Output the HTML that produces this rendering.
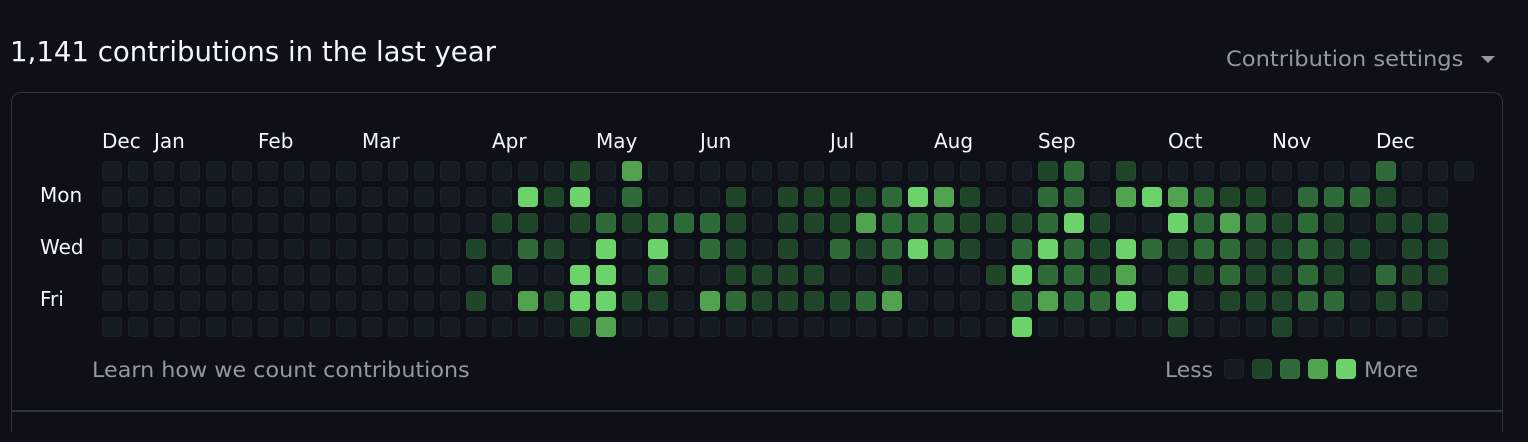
<!DOCTYPE html>
<html><head><meta charset="utf-8">
<style>
*{margin:0;padding:0;box-sizing:border-box}
html,body{width:1528px;height:442px;overflow:hidden}
body{background:#0d1117;position:relative;font-family:"DejaVu Sans","Liberation Sans",sans-serif;color:#f0f6fc}
.a{position:absolute;white-space:nowrap}
.title{left:10px;top:35px;font-size:28px;line-height:34px;transform:scaleX(0.985);transform-origin:left}
.set{left:1226px;top:46px;font-size:21px;line-height:26px;color:#9198a1;transform:scaleX(1.075);transform-origin:left}
.tri{left:1481px;top:56px;width:0;height:0;border-left:7px solid transparent;border-right:7px solid transparent;border-top:7px solid #9198a1}
.box{left:11px;top:92px;width:1492px;height:340px;border:1.5px solid #30363d;border-bottom:none;border-radius:10px 10px 0 0}
.div{left:11px;top:410px;width:1492px;height:1.5px;background:#30363d}
.m{font-size:20px;line-height:24px;top:129px}
.d{font-size:20px;line-height:24px;left:40px}
.c{position:absolute;width:20px;height:20px;border-radius:4px;box-shadow:inset 0 0 0 1px rgba(255,255,255,0.03)}
.l0{background:#151b23}.l1{background:#1f4529}.l2{background:#2e6a38}.l3{background:#51a350}.l4{background:#6bd36a}
.g{font-size:21px;line-height:26px;color:#9198a1;top:357px;transform-origin:left}
</style></head><body>
<div class="a title">1,141 contributions in the last year</div>
<div class="a set">Contribution settings</div>
<div class="a tri"></div>
<div class="a box"></div>
<div class="a div"></div>
<div class="a m" style="left:102px">Dec</div>
<div class="a m" style="left:154px">Jan</div>
<div class="a m" style="left:258px">Feb</div>
<div class="a m" style="left:362px">Mar</div>
<div class="a m" style="left:492px">Apr</div>
<div class="a m" style="left:596px">May</div>
<div class="a m" style="left:700px">Jun</div>
<div class="a m" style="left:830px">Jul</div>
<div class="a m" style="left:934px">Aug</div>
<div class="a m" style="left:1038px">Sep</div>
<div class="a m" style="left:1168px">Oct</div>
<div class="a m" style="left:1272px">Nov</div>
<div class="a m" style="left:1376px">Dec</div>
<div class="a d" style="top:183px">Mon</div>
<div class="a d" style="top:235px">Wed</div>
<div class="a d" style="top:287px">Fri</div>
<div id="grid"></div>
<div class="a g" style="left:92px;transform:scaleX(1.06)">Learn how we count contributions</div>
<div class="a g" style="left:1165px;transform:scaleX(1.04)">Less</div>
<div class="c l0" style="left:1224px;top:359px"></div>
<div class="c l1" style="left:1252px;top:359px"></div>
<div class="c l2" style="left:1280px;top:359px"></div>
<div class="c l3" style="left:1308px;top:359px"></div>
<div class="c l4" style="left:1336px;top:359px"></div>
<div class="a g" style="left:1364px;transform:scaleX(1.04)">More</div>
<script>
var A=[
"0000103000000000000",
"0041402000101111243",
"0110121222101113222",
"1021040402101021242",
"0200440200111100100",
"1031441103211112300",
"0000130000000000000"];
var B=[
"00012010000000002000",
"1002203432110222100",
"1112410042321210111",
"1024214212211211011",
"0142213011211210211",
"0023224040111220110",
"0040000010001000000"];
var h="";
for(var r=0;r<7;r++){
 var row="00000000000000"+A[r]+B[r];
 var n=(r==0)?53:52;
 for(var c=0;c<n;c++){
  var v=row[c]||"0";
  h+='<div class="c l'+v+'" style="left:'+(102+26*c)+'px;top:'+(161+26*r)+'px"></div>';
 }
}
document.getElementById("grid").innerHTML=h;
</script>
</body></html>
